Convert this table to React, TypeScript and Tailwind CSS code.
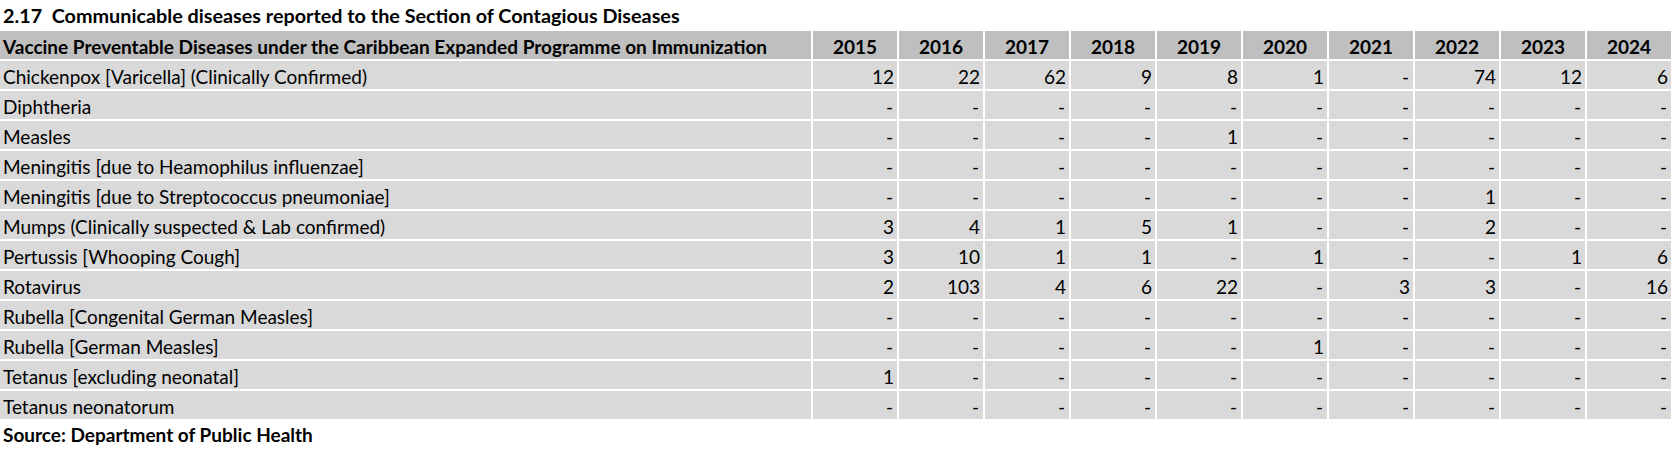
import { Fragment } from "react"

const years = [2015, 2016, 2017, 2018, 2019, 2020, 2021, 2022, 2023, 2024]

type Row = { name: string; values: (number | null)[] }

const rows: Row[] = [
    { name: "Chickenpox [Varicella] (Clinically Confirmed)", values: [12, 22, 62, 9, 8, 1, null, 74, 12, 6] },
    { name: "Diphtheria", values: [null, null, null, null, null, null, null, null, null, null] },
    { name: "Measles", values: [null, null, null, null, 1, null, null, null, null, null] },
    { name: "Meningitis [due to Heamophilus influenzae]", values: [null, null, null, null, null, null, null, null, null, null] },
    { name: "Meningitis [due to Streptococcus pneumoniae]", values: [null, null, null, null, null, null, null, 1, null, null] },
    { name: "Mumps (Clinically suspected & Lab confirmed)", values: [3, 4, 1, 5, 1, null, null, 2, null, null] },
    { name: "Pertussis [Whooping Cough]", values: [3, 10, 1, 1, null, 1, null, null, 1, 6] },
    { name: "Rotavirus", values: [2, 103, 4, 6, 22, null, 3, 3, null, 16] },
    { name: "Rubella [Congenital German Measles]", values: [null, null, null, null, null, null, null, null, null, null] },
    { name: "Rubella [German Measles]", values: [null, null, null, null, null, 1, null, null, null, null] },
    { name: "Tetanus [excluding neonatal]", values: [1, null, null, null, null, null, null, null, null, null] },
    { name: "Tetanus neonatorum", values: [null, null, null, null, null, null, null, null, null, null] },
]

export default function App() {
    return (
        <div className="w-[1674px] h-[451px] bg-white text-black font-['Lato',sans-serif] text-[19px] leading-[19px]">
            {/* Title */}
            <div className="h-[31px] flex items-end pb-[6px] pl-[3px] font-bold whitespace-pre text-[19.8px]">
                2.17  Communicable diseases reported to the Section of Contagious Diseases
            </div>

            <div className="grid grid-cols-[811px_repeat(10,84px)] gap-[2px] auto-rows-[28px]">
                {/* Header */}
                <div className="bg-[#bfbfbf] flex items-end pb-[3px] pl-[3px] font-bold">
                    Vaccine Preventable Diseases under the Caribbean Expanded Programme on Immunization
                </div>
                {years.map(y => (
                    <div key={y} className="bg-[#bfbfbf] flex items-end justify-center pb-[3px] font-bold">
                        {y}
                    </div>
                ))}

                {/* Body */}
                {rows.map(r => (
                    <Fragment key={r.name}>
                        <div className="bg-[#d9d9d9] flex items-end pb-[3.5px] pl-[3px]">
                            {r.name}
                        </div>
                        {r.values.map((v, i) => (
                            <div
                                key={i}
                                className={`bg-[#d9d9d9] flex items-end justify-end pb-[3.5px] ${v === null ? 'pr-[4px]' : 'pr-[3px]'}`}
                            >
                                {v === null ? '-' : v}
                            </div>
                        ))}
                    </Fragment>
                ))}
            </div>

            {/* Source */}
            <div className="pt-[6px] pl-[3px] font-bold">
                Source: Department of Public Health
            </div>
        </div>
    )
}
